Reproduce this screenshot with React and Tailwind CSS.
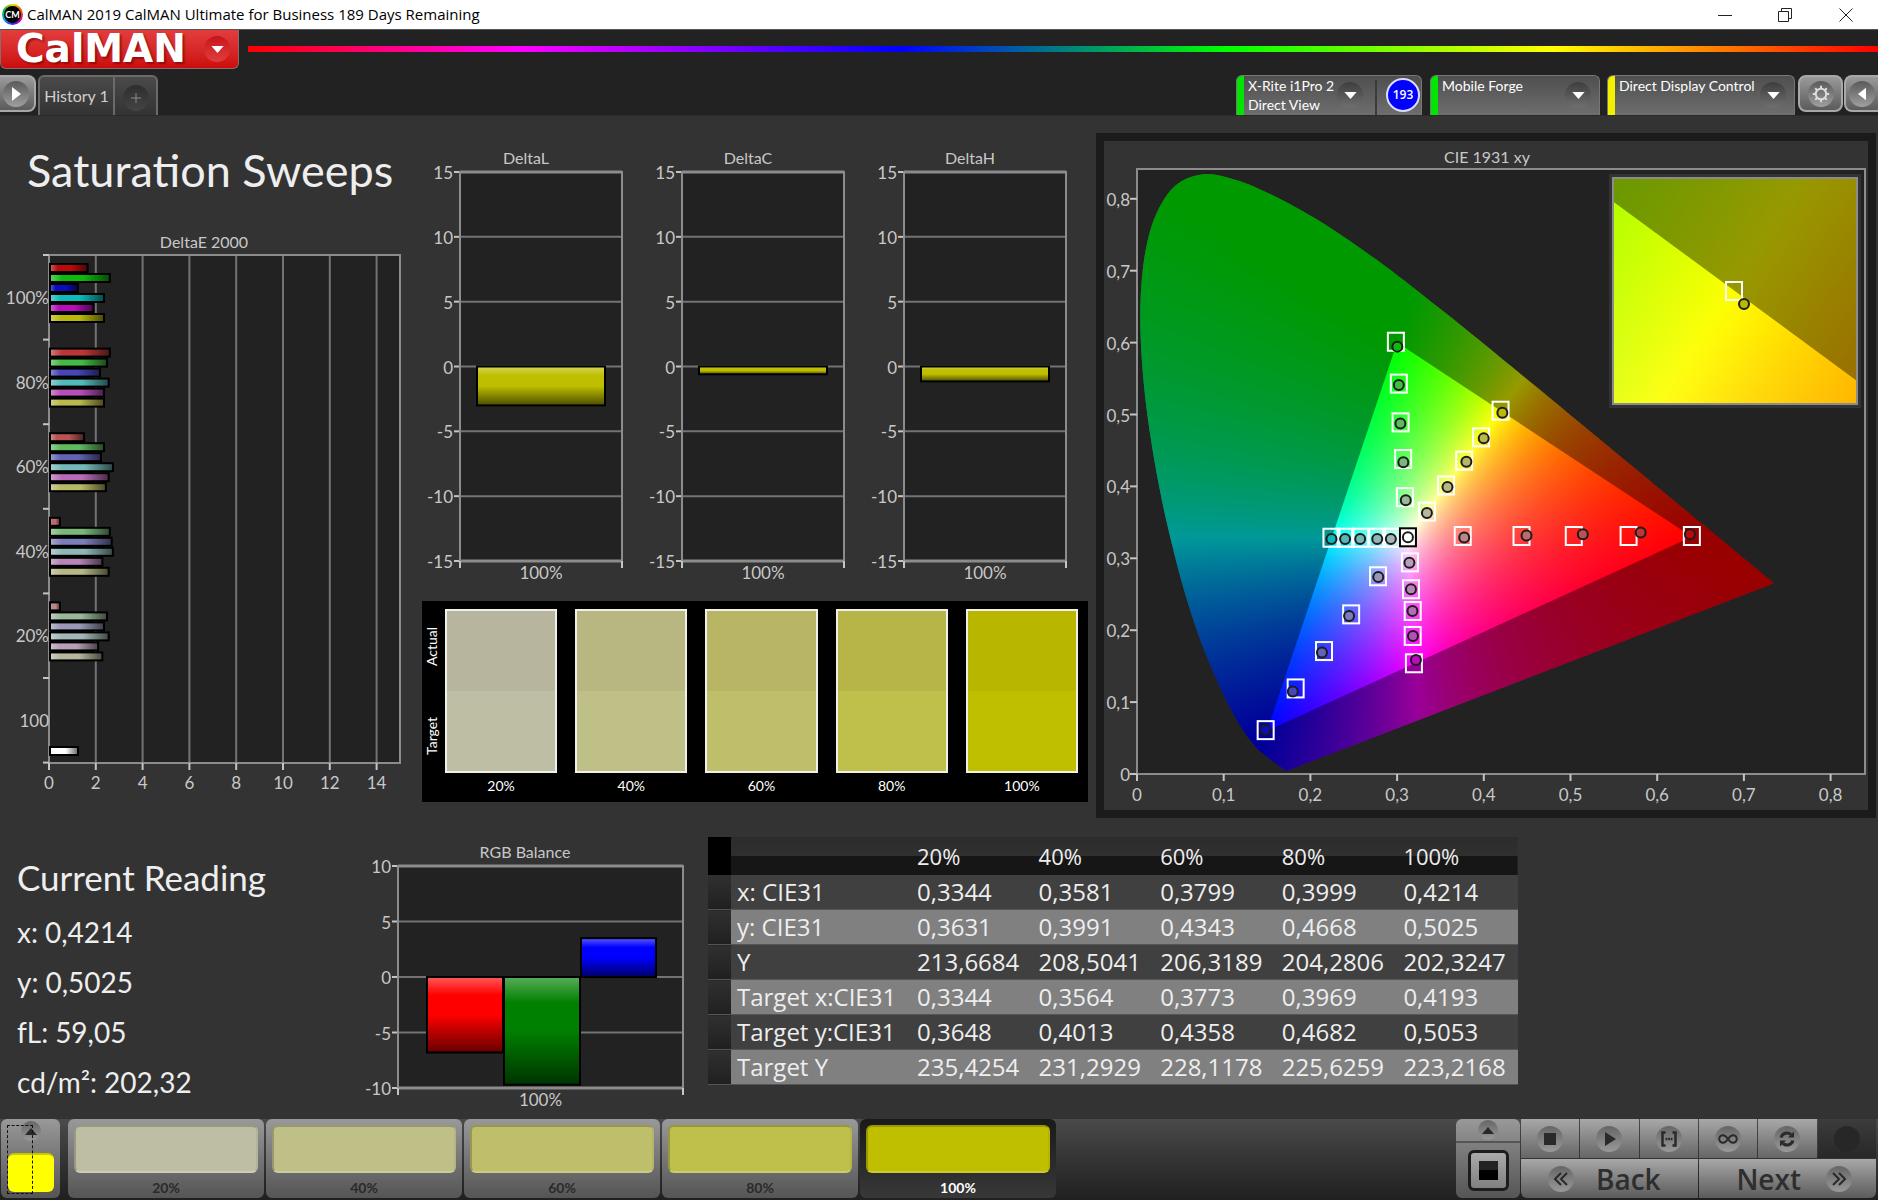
import React from "react";

const PALETTE = {
  "100%": ["#bc0a0a", "#0cba0c", "#0c0cba", "#0cbaba", "#ba0cba", "#b9b90a"],
  "80%": ["#bb3737", "#45b945", "#4646b8", "#55b8b8", "#b84fb8", "#b8b84c"],
  "60%": ["#b95353", "#60b860", "#6363b6", "#74b8b8", "#b76cb7", "#b7b768"],
  "40%": ["#bb6b6b", "#7bb77b", "#7c7cb8", "#8fb7b7", "#b786b7", "#b7b783"],
  "20%": ["#b98787", "#99b799", "#9999b7", "#a3b7b7", "#b7a0b7", "#b7b79d"],
};

const AXIS = "#8c8c8c";
const TICK = "#c4c4c4";
const LABEL = "#c8c8c8";

/* ---------- DeltaE 2000 ---------- */

const DELTA_E = [
  { label: "100%", values: [1.65, 2.6, 1.23, 2.35, 1.9, 2.35] },
  { label: "80%", values: [2.6, 2.48, 2.18, 2.55, 2.35, 2.35] },
  { label: "60%", values: [1.5, 2.35, 2.22, 2.73, 2.55, 2.43] },
  { label: "40%", values: [0.47, 2.6, 2.68, 2.73, 2.28, 2.55] },
  { label: "20%", values: [0.47, 2.48, 2.35, 2.55, 2.1, 2.28] },
];

function DeltaEChart() {
  const x = (v) => 49 + v * 23.4;
  const slot = 84.6;
  return (
    <svg viewBox="0 0 410 580" className="block h-auto w-full font-['Lato',sans-serif] text-[17px]" role="img" aria-label="DeltaE 2000">
      <defs>
        <linearGradient id="hbar" x1="0" x2="1" y1="0" y2="0">
          <stop offset="0" stopColor="#fff" stopOpacity="0.35" />
          <stop offset="0.2" stopColor="#fff" stopOpacity="0" />
          <stop offset="0.55" stopColor="#000" stopOpacity="0" />
          <stop offset="1" stopColor="#000" stopOpacity="0.6" />
        </linearGradient>
      </defs>
      <text x="204" y="18" textAnchor="middle" fill={LABEL} className="text-base">DeltaE 2000</text>
      <rect x="49" y="25" width="351" height="508" fill="#222" />
      {[2, 4, 6, 8, 10, 12, 14].map((v) => (
        <line key={v} x1={x(v)} x2={x(v)} y1="25" y2="533" stroke="#737373" strokeWidth="2" />
      ))}
      <rect x="49" y="25" width="351" height="508" fill="none" stroke={AXIS} strokeWidth="2" />
      {[0, 2, 4, 6, 8, 10, 12, 14].map((v) => (
        <g key={v}>
          <line x1={x(v)} x2={x(v)} y1="533" y2="540" stroke={TICK} strokeWidth="2" />
          <text x={x(v)} y="559" textAnchor="middle" fill={LABEL}>{v}</text>
        </g>
      ))}
      {[0, 1, 2, 3, 4, 5, 6].map((i) => (
        <line key={i} x1="43" x2="49" y1={25 + i * slot} y2={25 + i * slot} stroke={TICK} strokeWidth="2" />
      ))}
      {DELTA_E.map((group, g) => (
        <g key={group.label}>
          <text x="49" y={74 + g * slot} textAnchor="end" fill={LABEL}>{group.label}</text>
          {group.values.map((v, i) => {
            const box = { x: 50, y: 34 + g * slot + i * 10, width: x(v) - 50, height: 8 };
            return (
              <g key={i}>
                <rect {...box} fill={PALETTE[group.label][i]} />
                <rect {...box} fill="url(#hbar)" stroke="#000" strokeWidth="2" />
              </g>
            );
          })}
        </g>
      ))}
      <text x="49" y={74 + 5 * slot} textAnchor="end" fill={LABEL}>100</text>
      <rect x="50" y="517" width="28" height="8" fill="#fff" />
      <rect x="50" y="517" width="28" height="8" fill="url(#hbar)" stroke="#000" strokeWidth="2" />
    </svg>
  );
}

/* ---------- Vertical bar charts ---------- */

function BarChart({ title, width, height, left, right, top, bottom, max, bars, titleX }) {
  const mid = (top + bottom) / 2;
  const unit = (bottom - top) / (2 * max);
  const ticks = [];
  for (let v = max; v >= -max; v -= 5) ticks.push(v);
  const id = "vbar" + title.replace(" ", "");
  return (
    <svg viewBox={`0 0 ${width} ${height}`} className="block h-auto w-full font-['Lato',sans-serif] text-[17px]" role="img" aria-label={title}>
      <defs>
        <linearGradient id={id} x1="0" x2="0" y1="0" y2="1">
          <stop offset="0" stopColor="#fff" stopOpacity="0.35" />
          <stop offset="0.24" stopColor="#fff" stopOpacity="0" />
          <stop offset="0.5" stopColor="#000" stopOpacity="0" />
          <stop offset="1" stopColor="#000" stopOpacity="0.6" />
        </linearGradient>
      </defs>
      <text x={titleX} y={top - 8} textAnchor="middle" fill={LABEL} className="text-base">{title}</text>
      <rect x={left} y={top} width={right - left} height={bottom - top} fill="#222" />
      {ticks.map((v) => {
        const y = mid - v * unit;
        const edge = Math.abs(v) === max;
        return (
          <g key={v}>
            <line x1={left} x2={right} y1={y} y2={y} stroke={edge ? AXIS : "#737373"} strokeWidth={edge ? 3 : 2} />
            <line x1={left - 6} x2={left} y1={y} y2={y} stroke={TICK} strokeWidth="2" />
            <text x={left - 7} y={y + 7} textAnchor="end" fill={LABEL}>{v}</text>
          </g>
        );
      })}
      {[left, right].map((x) => (
        <g key={x}>
          <line x1={x} x2={x} y1={top - 1} y2={bottom} stroke={AXIS} strokeWidth="2" />
          <line x1={x} x2={x} y1={bottom} y2={bottom + 7} stroke={TICK} strokeWidth="2" />
        </g>
      ))}
      {bars.map((bar) => {
        const box = {
          x: bar.x,
          width: bar.width,
          y: bar.value < 0 ? mid : mid - bar.value * unit,
          height: Math.abs(bar.value) * unit,
        };
        return (
          <g key={bar.color}>
            <rect {...box} fill={bar.color} />
            <rect {...box} fill={`url(#${id})`} stroke="#000" strokeWidth="2" />
          </g>
        );
      })}
      <text x={(left + right) / 2} y={bottom + 18} textAnchor="middle" fill={LABEL}>100%</text>
    </svg>
  );
}

/* ---------- Chromaticity diagram ---------- */

const LOCUS = [
  [0.1741, 0.005], [0.1733, 0.0048], [0.1714, 0.0051], [0.1689, 0.0069], [0.1644, 0.0109], [0.1566, 0.0177],
  [0.144, 0.0297], [0.1355, 0.0399], [0.1241, 0.0578], [0.1096, 0.0868], [0.0913, 0.1327],
  [0.0687, 0.2007], [0.0454, 0.295], [0.0235, 0.4127], [0.0082, 0.5384], [0.0039, 0.6548],
  [0.0139, 0.7502], [0.0389, 0.812], [0.0743, 0.8338], [0.1142, 0.8262], [0.1547, 0.8059],
  [0.1929, 0.7816], [0.2296, 0.7543], [0.2658, 0.7243], [0.3016, 0.6923], [0.3731, 0.6245],
  [0.4441, 0.5547], [0.5125, 0.4866], [0.5752, 0.4242], [0.627, 0.3725], [0.6658, 0.334],
  [0.6915, 0.3083], [0.719, 0.2809], [0.7347, 0.2653],
];

const RED = [0.64, 0.33];
const GREEN = [0.3, 0.6];
const BLUE = [0.15, 0.06];

// Catmull-Rom subdivision of the spectral locus.
function smoothLocus() {
  const out = [];
  for (let i = 0; i < LOCUS.length - 1; i++) {
    const p0 = LOCUS[Math.max(0, i - 1)];
    const p1 = LOCUS[i];
    const p2 = LOCUS[i + 1];
    const p3 = LOCUS[Math.min(LOCUS.length - 1, i + 2)];
    for (let s = 0; s < 8; s++) {
      const t = s / 8;
      out.push([0, 1].map((k) =>
        0.5 * (2 * p1[k] + (p2[k] - p0[k]) * t + (2 * p0[k] - 5 * p1[k] + 4 * p2[k] - p3[k]) * t * t +
          (3 * p1[k] - p0[k] - 3 * p2[k] + p3[k]) * t * t * t)));
    }
  }
  out.push(LOCUS[LOCUS.length - 1]);
  return out;
}
const LOCUS_POINTS = smoothLocus();

function toRgb(x, y) {
  const z = 1 - x - y;
  return [
    3.2406 * x - 1.5372 * y - 0.4986 * z,
    -0.9689 * x + 1.8758 * y + 0.0415 * z,
    0.0557 * x - 0.204 * y + 1.057 * z,
  ];
}

// The ratio of two channels is constant along rays from the third primary, so
// one sweep per primary, combined with "darken", gives the full colour field.
function sweep(vertex, a, b, px, py, sx, sy) {
  const stops = [];
  for (let deg = 0; deg <= 360; deg += 0.5) {
    const t = (deg * Math.PI) / 180;
    const rgb = toRgb(vertex[0] + (Math.sin(t) * 100) / sx, vertex[1] + (Math.cos(t) * 100) / sy);
    const color = [255, 255, 255];
    const va = rgb[a];
    const vb = rgb[b];
    if (va > vb && va > 0) color[b] = Math.round(255 * Math.max(0, vb / va));
    else if (vb > va && vb > 0) color[a] = Math.round(255 * Math.max(0, va / vb));
    stops.push(`rgb(${color.join(",")}) ${deg}deg`);
  }
  return `conic-gradient(at ${px(vertex[0])}px ${py(vertex[1])}px, ${stops.join(",")})`;
}

function colorField(px, py, sx, sy) {
  return {
    backgroundImage: [
      sweep(BLUE, 0, 1, px, py, sx, sy),
      sweep(GREEN, 0, 2, px, py, sx, sy),
      sweep(RED, 1, 2, px, py, sx, sy),
    ].join(","),
    backgroundBlendMode: "darken",
  };
}

const LEVELS = ["20%", "40%", "60%", "80%", "100%"];
const SERIES = [
  { hue: 0, targets: [[0.3757, 0.331], [0.4435, 0.331], [0.5038, 0.331], [0.567, 0.331], [0.64, 0.331]], readings: [[0.3774, 0.329], [0.4493, 0.3317], [0.5142, 0.3335], [0.5809, 0.336], [0.6377, 0.3335]] },
  { hue: 1, targets: [[0.309, 0.385], [0.307, 0.438], [0.304, 0.489], [0.302, 0.543], [0.2986, 0.6012]], readings: [[0.31, 0.3807], [0.3072, 0.4335], [0.3038, 0.4876], [0.302, 0.541], [0.3003, 0.5944]] },
  { hue: 2, targets: [[0.278, 0.275], [0.247, 0.222], [0.2157, 0.171], [0.183, 0.119], [0.1484, 0.061]], readings: [[0.2783, 0.2739], [0.2446, 0.2199], [0.2133, 0.1689], [0.1797, 0.1149], [0.1478, 0.0615]] },
  { hue: 3, targets: [[0.2933, 0.3286], [0.2771, 0.3286], [0.2574, 0.3286], [0.2406, 0.3286], [0.2243, 0.3286]], readings: [[0.2928, 0.3267], [0.2771, 0.3267], [0.2574, 0.3267], [0.24, 0.3267], [0.2243, 0.3267]] },
  { hue: 4, targets: [[0.3148, 0.2944], [0.316, 0.257], [0.318, 0.2267], [0.318, 0.192], [0.3194, 0.154]], readings: [[0.3142, 0.2938], [0.316, 0.257], [0.3177, 0.2267], [0.3183, 0.1919], [0.3217, 0.1584]] },
  { hue: 5, targets: [[0.3344, 0.3648], [0.3564, 0.4013], [0.3773, 0.4358], [0.3969, 0.4682], [0.4193, 0.5053]], readings: [[0.3344, 0.3631], [0.3581, 0.3991], [0.3799, 0.4343], [0.3999, 0.4668], [0.4214, 0.5025]] },
];

function Target({ x, y, color = "#fff", fill = "none" }) {
  return <rect x={x - 8} y={y - 9} width="16" height="18" fill={fill} stroke={color} strokeWidth="2" />;
}

function Reading({ x, y, fill }) {
  return <circle cx={x} cy={y} r="5" fill={fill} stroke="#1c1c1c" strokeWidth="2" />;
}

function CieDiagram() {
  const X = (v) => 33 + v * 867;
  const Y = (v) => 633 - v * 719;
  const fieldX = (v) => X(v) - 33;
  const fieldY = (v) => Y(v) - 28;
  const pts = LOCUS_POINTS.map(([x, y]) => [X(x), Y(y)]);
  const locusPath = "M" + pts.map((p) => p.map((n) => n.toFixed(1)).join(" ")).join("L") + "Z";
  const clip = `polygon(${LOCUS_POINTS.map(([x, y]) => `${fieldX(x).toFixed(1)}px ${fieldY(y).toFixed(1)}px`).join(",")})`;
  const tri = "M" + [RED, GREEN, BLUE].map(([x, y]) => `${X(x)} ${Y(y)}`).join("L") + "Z";
  const insetX = (v) => 122 + (v - 0.4193) * 4880;
  const insetY = (v) => 113 - (v - 0.5053) * 4520;
  return (
    <svg viewBox="0 0 764 669" className="block h-auto w-full font-['Lato',sans-serif] text-[17px]" role="img" aria-label="CIE 1931 xy">
      <text x="383" y="22" textAnchor="middle" fill={LABEL} className="text-base">CIE 1931 xy</text>
      <rect x="33" y="28" width="728" height="605" fill="#222" />
      <foreignObject x="33" y="28" width="728" height="605">
        <div className="h-full w-full" style={{ ...colorField(fieldX, fieldY, 867, 719), clipPath: clip }} />
      </foreignObject>
      <path d={locusPath + tri} fillRule="evenodd" fill="#000" fillOpacity="0.4" />
      <rect x="33" y="28" width="728" height="605" fill="none" stroke={AXIS} strokeWidth="2" />
      {[0, 1, 2, 3, 4, 5, 6, 7, 8].map((i) => {
        const label = i === 0 ? "0" : `0,${i}`;
        return (
          <g key={i}>
            <line x1={X(i / 10)} x2={X(i / 10)} y1="633" y2="640" stroke={TICK} strokeWidth="2" />
            <text x={X(i / 10)} y="660" textAnchor="middle" fill={LABEL}>{label}</text>
            <line x1="26" x2="33" y1={Y(i / 10)} y2={Y(i / 10)} stroke={TICK} strokeWidth="2" />
            <text x="26" y={Y(i / 10) + 7} textAnchor="end" fill={LABEL}>{label}</text>
          </g>
        );
      })}
      {SERIES.map((s) => (
        <g key={s.hue}>
          {s.targets.map(([x, y], i) => <Target key={i} x={X(x)} y={Y(y)} />)}
          {s.readings.map(([x, y], i) => <Reading key={i} x={X(x)} y={Y(y)} fill={PALETTE[LEVELS[i]][s.hue]} />)}
        </g>
      ))}
      <Target x={X(0.3125)} y={Y(0.3292)} color="#000" fill="#fff" />
      <Reading x={X(0.3125)} y={Y(0.3292)} fill="#fff" />
      <rect x="505" y="33" width="252" height="234" fill="#333" />
      <svg x="509" y="37" width="244" height="226" viewBox="0 0 244 226">
        <foreignObject x="0" y="0" width="244" height="226">
          <div className="h-full w-full" style={colorField(insetX, insetY, 4880, 4520)} />
        </foreignObject>
        <path
          d={`M${insetX(GREEN[0])} ${insetY(GREEN[1])}L${insetX(RED[0])} ${insetY(RED[1])}L2000 -2000Z`}
          fill="#000"
          fillOpacity="0.4"
        />
        <Target x={121} y={113} />
        <Reading x={131} y={126} fill="#b9b900" />
      </svg>
      <rect x="509" y="37" width="244" height="226" fill="none" stroke={AXIS} strokeWidth="2" />
    </svg>
  );
}

/* ---------- Window chrome ---------- */

function TitleBar() {
  return (
    <header className="flex h-[30px] items-center justify-between border-b border-[#555] bg-white text-black">
      <div className="flex items-center gap-1 pl-0.5">
        <span
          className="flex h-[21px] w-[21px] items-center justify-center rounded-full bg-[conic-gradient(#f5d000,#f06000,#e000a0,#3020ff,#00b0e0,#00c020,#f5d000)]"
          aria-hidden="true"
        >
          <span className="flex h-[17px] w-[17px] items-center justify-center rounded-full bg-black font-['Lato',sans-serif] text-[9px] font-bold text-white">CM</span>
        </span>
        <span className="font-['Open_Sans',sans-serif] text-[15px]">CalMAN 2019 CalMAN Ultimate for Business 189 Days Remaining</span>
      </div>
      <div className="mr-px flex">
        <button aria-label="Minimize" className="flex h-7 w-[60px] items-center justify-center">
          <svg width="14" height="14" viewBox="0 0 14 14" stroke="#222" fill="none"><path d="M0 7.5H14" /></svg>
        </button>
        <button aria-label="Restore" className="flex h-7 w-[60px] items-center justify-center">
          <svg width="14" height="14" viewBox="0 0 14 14" stroke="#222" fill="none"><path d="M.5 3.5h10v10H.5zM3.5 3.5v-3h10v10h-3" /></svg>
        </button>
        <button aria-label="Close" className="flex h-7 w-[62px] items-center justify-center">
          <svg width="14" height="14" viewBox="0 0 14 14" stroke="#222" fill="none"><path d="M.5.5l13 13M13.5.5l-13 13" /></svg>
        </button>
      </div>
    </header>
  );
}

function Knob({ children, className = "" }) {
  return (
    <span className={`flex h-[26px] w-[26px] shrink-0 items-center justify-center rounded-full ${className}`}>{children}</span>
  );
}

function Caret({ color = "#fff" }) {
  return <svg width="13" height="7" viewBox="0 0 14 8" fill={color}><path d="M0 0H14L7 8Z" /></svg>;
}

function BrandBar() {
  return (
    <div className="flex h-[45px] items-start">
      <div className="flex h-[39px] w-[239px] items-center justify-between rounded-b-md border border-t-0 border-[#8a6a6a] bg-linear-to-b from-[#e23c3c] to-[#cc0a0a] pr-2 pl-[15px]">
        <span className="font-['DejaVu_Sans',sans-serif] text-[39px] leading-9 font-bold text-white [text-shadow:2px_2px_2px_rgba(80,0,0,0.5)]">CalMAN</span>
        <button aria-label="Application menu">
          <Knob className="bg-linear-to-b from-[#c8101c] to-[#e03c3c]"><Caret /></Knob>
        </button>
      </div>
      <div className="mt-4 ml-[9px] h-1.5 flex-1 bg-[linear-gradient(90deg,#ff0000,#ff00ff_16.7%,#0000ff_40%,#00ff00_60%,#ffff00_80%,#ff0000)]" />
    </div>
  );
}

function SourceTab({ stripe, lines, width, badge }) {
  return (
    <div className={`flex overflow-hidden rounded-t-md border border-b-0 border-[#777] bg-linear-to-b from-[#4f4f4f] to-[#6e6e6e] ${width}`}>
      <span className={`w-[7px] ${stripe}`} />
      <button className="flex flex-1 justify-between pl-1 text-left">
        <span className="font-['Lato',sans-serif] text-sm leading-[19px] text-white">
          {lines.map((l) => <span key={l} className="block whitespace-nowrap">{l}</span>)}
        </span>
        <Knob className={`mt-1.5 bg-linear-to-b from-[#3e3e3e] to-[#707070] ${badge ? "mr-3" : "mr-2"}`}><Caret /></Knob>
      </button>
      {badge && (
        <span className="mt-1 flex border-l-2 border-[#3c3c3c] pr-px pl-[9px]">
          <span className="-mt-0.5 flex h-[34px] w-[34px] items-center justify-center rounded-full border-2 border-[#dcdcff] bg-[#0000ff] font-['Open_Sans',sans-serif] text-xs font-semibold text-white">{badge}</span>
        </span>
      )}
    </div>
  );
}

const chromeButton = "flex h-[37px] items-center border-2 border-[#a8a8a8] bg-linear-to-b from-[#9a9a9a] to-[#5c5c5c]";
const knobDark = "bg-linear-to-b from-[#5a5a5a] to-[#a0a0a0]";

function TabsRow() {
  return (
    <nav className="flex h-10 items-stretch justify-between">
      <div className="flex items-stretch">
        <button aria-label="Expand history" className={`${chromeButton} w-9 justify-center rounded-r-lg border-l-0 pr-0.5`}>
          <Knob className={knobDark}>
            <svg width="9" height="14" viewBox="0 0 9 14" fill="#fff"><path d="M0 0V14L9 7Z" /></svg>
          </Knob>
        </button>
        <div className="ml-0.5 flex items-stretch rounded-t-md border-2 border-b-0 border-[#6a6a6a] bg-linear-to-b from-[#4a4a4a] to-[#333]">
          <button className="w-[75px] border-r-2 border-[#6a6a6a] font-['Lato',sans-serif] text-base text-[#d0d0d0]">History 1</button>
          <button aria-label="Add history" className="flex w-[41px] items-center justify-center pt-1">
            <Knob className="bg-linear-to-b from-[#2e2e2e] to-[#444]">
              <svg width="10" height="10" viewBox="0 0 10 10" stroke="#8c8c8c" fill="none"><path d="M0 5H10M5 0V10" /></svg>
            </Knob>
          </button>
        </div>
      </div>
      <div className="flex items-stretch">
        <SourceTab stripe="bg-[#00e600]" lines={["X-Rite i1Pro 2", "Direct View"]} width="w-[186px] mr-2" badge="193" />
        <SourceTab stripe="bg-[#00e600]" lines={["Mobile Forge"]} width="w-[170px] mr-[7px]" />
        <SourceTab stripe="bg-[#f0f000]" lines={["Direct Display Control"]} width="w-[188px] mr-[3px]" />
        <button aria-label="Settings" className={`${chromeButton} w-[45px] justify-center rounded-lg`}>
          <Knob className={knobDark}>
            <svg width="18" height="18" viewBox="0 0 18 18" fill="none" stroke="#ddd" strokeWidth="2">
              <circle cx="9" cy="9" r="5.3" />
              <path d="M9 .8V3.5M9 14.5V17.2M.8 9H3.5M14.5 9H17.2M3.2 3.2L5 5M13 13L14.8 14.8M3.2 14.8L5 13M13 5L14.8 3.2" />
            </svg>
          </Knob>
        </button>
        <button aria-label="Collapse panel" className={`${chromeButton} ml-px w-[34px] justify-center rounded-l-lg border-r-0`}>
          <Knob className={knobDark}>
            <svg width="8" height="14" viewBox="0 0 9 14" fill="#fff"><path d="M9 0V14L0 7Z" /></svg>
          </Knob>
        </button>
      </div>
    </nav>
  );
}

/* ---------- Swatches ---------- */

const SWATCHES = [
  { label: "20%", actual: "bg-[#b7b59d]", target: "bg-[#bebea4]" },
  { label: "40%", actual: "bg-[#b8b681]", target: "bg-[#bfbf88]" },
  { label: "60%", actual: "bg-[#b8b565]", target: "bg-[#bfbf6b]" },
  { label: "80%", actual: "bg-[#b8b548]", target: "bg-[#bfbf4c]" },
  { label: "100%", actual: "bg-[#b9b600]", target: "bg-[#bfbf00]" },
];

function SwatchPanel() {
  return (
    <section className="mt-[11px] mr-2 ml-3 flex h-[201px] bg-black pt-2 pr-2.5 font-['Lato',sans-serif] text-sm text-white">
      <div className="flex h-[164px] w-[23px] flex-col items-center pr-1">
        <span className="flex flex-1 rotate-180 items-center justify-center pt-2 [writing-mode:vertical-rl]">Actual</span>
        <span className="flex flex-1 rotate-180 items-center justify-center pb-2 [writing-mode:vertical-rl]">Target</span>
      </div>
      <div className="grid flex-1 grid-cols-5 gap-[18px]">
        {SWATCHES.map((s) => (
          <div key={s.label} className="text-center">
            <div className="flex h-[164px] flex-col border-2 border-[#f0f0e8]">
              <div className={`flex-1 ${s.actual}`} />
              <div className={`flex-1 ${s.target}`} />
            </div>
            <div className="pt-[3px]">{s.label}</div>
          </div>
        ))}
      </div>
    </section>
  );
}

/* ---------- Table ---------- */

const ROWS = [
  ["x: CIE31", "0,3344", "0,3581", "0,3799", "0,3999", "0,4214"],
  ["y: CIE31", "0,3631", "0,3991", "0,4343", "0,4668", "0,5025"],
  ["Y", "213,6684", "208,5041", "206,3189", "204,2806", "202,3247"],
  ["Target x:CIE31", "0,3344", "0,3564", "0,3773", "0,3969", "0,4193"],
  ["Target y:CIE31", "0,3648", "0,4013", "0,4358", "0,4682", "0,5053"],
  ["Target Y", "235,4254", "231,2929", "228,1178", "225,6259", "223,2168"],
];

function ReadingsTable() {
  return (
    <table className="w-full table-fixed border-collapse text-left font-['Open_Sans',sans-serif] text-[#eee]">
      <colgroup>
        <col className="w-[23px]" />
        <col className="w-[179px]" />
        <col /><col /><col /><col /><col />
      </colgroup>
      <thead>
        <tr className="h-[38px] bg-[linear-gradient(#2c2c2c,#303030_50%,#161616_50%,#161616)] text-[22px] leading-8">
          <td className="bg-black" />
          <td />
          {LEVELS.map((l) => <th key={l} scope="col" className="pl-[7px] font-normal">{l}</th>)}
        </tr>
      </thead>
      <tbody className="text-2xl leading-[34px]">
        {ROWS.map((row) => (
          <tr key={row[0]} className="border-b border-[#555] odd:bg-[#404040] even:bg-[#808080]">
            <td className="bg-linear-to-b from-[#303030] to-[#202020]" />
            <th scope="row" className="pl-1.5 font-normal whitespace-nowrap">{row[0]}</th>
            {row.slice(1).map((v, i) => <td key={i} className="pl-[7px]">{v}</td>)}
          </tr>
        ))}
      </tbody>
    </table>
  );
}

/* ---------- Footer ---------- */

const PATTERNS = [
  { label: "20%", color: "bg-[#bebea4]" },
  { label: "40%", color: "bg-[#bfbf88]" },
  { label: "60%", color: "bg-[#bfbf6b]" },
  { label: "80%", color: "bg-[#bfbf4c]" },
  { label: "100%", color: "bg-[#bfbf00]", selected: true },
];

const footerFace = "bg-linear-to-b from-[#999] to-[#555]";
const footerKnob = "bg-linear-to-b from-[#666] to-[#999]";
const INK = "#2a2a2a";

const TRANSPORT = [
  { label: "Stop", icon: <svg width="12" height="12" viewBox="0 0 12 12" fill={INK}><path d="M0 0H12V12H0Z" /></svg> },
  { label: "Play", icon: <svg width="16" height="14" viewBox="0 0 16 14" fill={INK}><path d="M4 0V14L15 7Z" /></svg> },
  {
    label: "Read range",
    icon: (
      <svg width="18" height="16" viewBox="0 0 18 16" fill="none" stroke={INK} strokeWidth="2.5">
        <path d="M5.5 1.5H2.5V14.5H5.5M12.5 1.5H15.5V14.5H12.5" />
        <path d="M5.5 8H12.5" strokeDasharray="1.8 .8" />
      </svg>
    ),
  },
  {
    label: "Continuous",
    icon: (
      <svg width="20" height="10" viewBox="0 0 20 10" fill="none" stroke={INK} strokeWidth="2">
        <path d="M10 5C8 2 6.5 1.2 5 1.2A3.8 3.8 0 0 0 5 8.8C6.5 8.8 8 8 10 5S13.5 1.2 15 1.2A3.8 3.8 0 0 1 15 8.8C13.5 8.8 12 8 10 5Z" />
      </svg>
    ),
  },
  {
    label: "Refresh",
    icon: (
      <svg width="16" height="16" viewBox="0 0 16 16" fill="none" stroke={INK} strokeWidth="3">
        <path d="M2 6.5A6.2 6.2 0 0 1 12 3.5M14 9.5A6.2 6.2 0 0 1 4 12.5" />
        <path d="M15 .5V6.500H9ZM1 15.5V9.5H7Z" fill={INK} stroke="none" />
      </svg>
    ),
  },
];

function Footer() {
  return (
    <footer className="mt-auto flex h-[81px] items-stretch justify-between bg-linear-to-b from-[#4a4a4a] to-[#202020] pb-0.5">
      <div className="flex">
        <button aria-label="Show patterns" className={`relative mr-2 ml-px flex w-[59px] flex-col items-center justify-between rounded-md pt-0.5 pb-1.5 ${footerFace}`}>
          <span className={`flex h-5 w-5 items-center justify-center rounded-full ${footerKnob}`}>
            <svg width="12" height="7" viewBox="0 0 12 7" fill={INK}><path d="M0 7H12L6 0Z" /></svg>
          </span>
          <span className="h-[39px] w-[46px] rounded-md border-t-2 border-[#c8c800] bg-[#ffff00]" />
          <span className="absolute top-1.5 bottom-1 left-1.5 w-[26px] border border-dashed border-[#111]" />
        </button>
        {PATTERNS.map((p) => (
          <button
            key={p.label}
            className={`mr-0.5 flex w-[196px] flex-col items-center rounded-md px-1.5 pt-1.5 font-['Lato',sans-serif] text-sm font-bold ${p.selected ? "bg-linear-to-b from-[#1a1a1a] to-[#383838] text-white" : "bg-linear-to-b from-[#999] to-[#555] text-[#2a2a2a]"}`}
          >
            <span className={`h-[48px] w-full rounded-md border-2 border-black/20 border-r-black/5 border-b-white/20 ${p.color}`} />
            <span className="pt-[5px] leading-5">{p.label}</span>
          </button>
        ))}
      </div>
      <div className="mr-0.5 flex">
        <div className="mr-px flex w-16 flex-col">
          <button aria-label="Show meter" className="flex h-6 items-center justify-center rounded-t-md border-b-2 border-[#555] bg-linear-to-b from-[#999] to-[#858585]">
            <span className={`flex h-5 w-5 items-center justify-center rounded-full ${footerKnob}`}>
              <svg width="12" height="7" viewBox="0 0 12 7" fill={INK}><path d="M0 7H12L6 0Z" /></svg>
            </span>
          </button>
          <button aria-label="Stop reading" className="flex flex-1 items-center justify-center rounded-b-md bg-linear-to-b from-[#808080] to-[#555]">
            <span className="flex h-[41px] w-[41px] items-center justify-center rounded-md border-[3px] border-[#1c1c1c] bg-linear-to-b from-[#aaa] to-[#808080]">
              <span className="h-[19px] w-[19px] bg-[linear-gradient(#222_50%,#000_50%)]" />
            </span>
          </button>
        </div>
        <div className="flex w-[355px] flex-col gap-px">
          <div className="grid h-[39px] grid-cols-6 gap-px">
            {TRANSPORT.map((t) => (
              <button key={t.label} aria-label={t.label} className="flex items-center justify-center bg-linear-to-b from-[#a8a8a8] to-[#666]">
                <Knob className={footerKnob}>{t.icon}</Knob>
              </button>
            ))}
            <span className="flex items-center justify-center bg-linear-to-b from-[#3c3c3c] to-[#282828]">
              <Knob className="bg-[#272727]" />
            </span>
          </div>
          <div className="grid flex-1 grid-cols-2 gap-px font-['Open_Sans',sans-serif] text-[28px] leading-8 font-semibold text-[#2e2e2e]">
            <button className="flex items-center gap-[22px] rounded-bl-md bg-linear-to-b from-[#a8a8a8] to-[#5c5c5c] pl-[27px]">
              <Knob className={footerKnob}>
                <svg width="14" height="14" viewBox="0 0 14 14" fill="none" stroke={INK} strokeWidth="2"><path d="M7 1L1 7L7 13M13 1L7 7L13 13" /></svg>
              </Knob>
              Back
            </button>
            <button className="flex items-center justify-end gap-[25px] rounded-br-md bg-linear-to-b from-[#a8a8a8] to-[#5c5c5c] pr-6">
              Next
              <Knob className={footerKnob}>
                <svg width="14" height="14" viewBox="0 0 14 14" fill="none" stroke={INK} strokeWidth="2"><path d="M7 1L13 7L7 13M1 1L7 7L1 13" /></svg>
              </Knob>
            </button>
          </div>
        </div>
      </div>
    </footer>
  );
}

/* ---------- Page ---------- */

const DELTAS = [
  { title: "DeltaL", value: -3 },
  { title: "DeltaC", value: -0.6 },
  { title: "DeltaH", value: -1.15 },
];

export default function App() {
  return (
    <div className="flex min-h-screen flex-col bg-[#222]">
      <TitleBar />
      <BrandBar />
      <TabsRow />
      <main className="flex flex-1 flex-col border-t border-[#2a2a2a] bg-[#333] font-['Lato',sans-serif]">
        <div className="grid grid-cols-[minmax(0,410fr)_minmax(0,686fr)_minmax(0,782fr)] items-start">
          <section>
            <h1 className="flex h-[114px] items-center pb-1 pl-[27px] text-[45px] whitespace-nowrap text-[#eee]">Saturation Sweeps</h1>
            <DeltaEChart />
          </section>
          <section>
            <div className="grid grid-cols-3 pt-6 pr-5">
              {DELTAS.map((d) => (
                <BarChart
                  key={d.title}
                  title={d.title}
                  titleX={116}
                  width={222}
                  height={450}
                  left={50}
                  right={212}
                  top={32}
                  bottom={421}
                  max={15}
                  bars={[{ color: "#bfbf00", value: d.value, x: 67, width: 128 }]}
                />
              ))}
            </div>
            <SwatchPanel />
          </section>
          <section className="mt-[17px] mr-0.5 border-8 border-[#1b1b1b]">
            <CieDiagram />
          </section>
        </div>
        <div className="grid grid-cols-[minmax(0,360fr)_minmax(0,340fr)_minmax(0,818fr)_minmax(0,360fr)] items-start pt-[19px]">
          <section className="pt-[17px] pl-[17px] text-[#eee]">
            <h2 className="pb-[7px] text-[35px] leading-[46px]">Current Reading</h2>
            <dl className="text-[28px] leading-[50px]">
              {[["x", "0,4214"], ["y", "0,5025"], ["fL", "59,05"], ["cd/m²", "202,32"]].map(([k, v]) => (
                <div key={k} className="flex gap-[7px]">
                  <dt>{k}:</dt>
                  <dd>{v}</dd>
                </div>
              ))}
            </dl>
          </section>
          <div className="pt-[3px]">
            <BarChart
              title="RGB Balance"
              titleX={165}
              width={340}
              height={272}
              left={38}
              right={323}
              top={26}
              bottom={248}
              max={10}
              bars={[
                { color: "#ff0000", value: -6.8, x: 67, width: 76 },
                { color: "#008000", value: -9.7, x: 144, width: 76 },
                { color: "#0000ff", value: 3.5, x: 221, width: 75 },
              ]}
            />
          </div>
          <div className="pl-2">
            <ReadingsTable />
          </div>
        </div>
      </main>
      <Footer />
    </div>
  );
}
